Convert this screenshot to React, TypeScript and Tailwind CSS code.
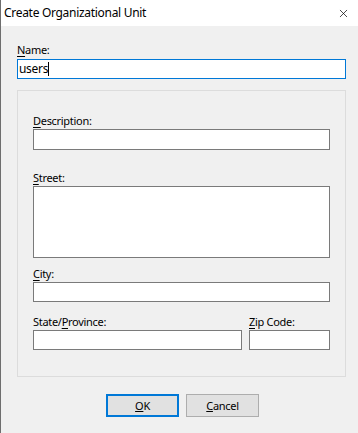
import { X } from 'lucide-react';

const font = { fontFamily: '"Noto Sans", "Open Sans", sans-serif' };

function Label({ mn, rest, pre = '' }: { mn: string; rest: string; pre?: string }) {
  return (
    <div className="h-[16px] text-[11px] leading-[16px] tracking-[-0.3px] text-black">
      {pre}
      <u className="underline-offset-[2px]">{mn}</u>
      {rest}
    </div>
  );
}

function Field({ h = 'h-[20px]', w = 'w-full' }: { h?: string; w?: string }) {
  return <div className={`${h} ${w} border border-[#7a7a7a] bg-white`} />;
}

export default function App() {
  return (
    <div className="w-[358px] h-[433px] bg-[#f0f0f0] border-l border-[#6e6e6e] flex flex-col" style={font}>
      {/* Title bar */}
      <div className="h-[26px] bg-white flex items-center justify-between pl-[3px] pr-[8px]">
        <span className="text-[12px] tracking-[-0.3px] text-black">Create Organizational Unit</span>
        <X className="w-[13px] h-[13px] text-black" strokeWidth={1.3} />
      </div>

      <div className="pl-[16px] pt-[16px]">
        <Label mn="N" rest="ame:" />
        <div className="mt-[1px] w-[329px] h-[20px] border border-[#0078d7] bg-white flex items-center pl-[1px]">
          <span className="text-[12px] leading-none tracking-[-0.3px] text-black">users</span>
          <span className="w-px h-[14px] bg-black" />
        </div>

        {/* Group box */}
        <div className="mt-[11px] w-[329px] h-[287px] border border-[#dcdcdc] px-[15px] pt-[22px]">
          <Label mn="D" rest="escription:" />
          <Field h="h-[21px]" />
          <div className="mt-[20px]">
            <Label mn="S" rest="treet:" />
            <Field h="h-[72px]" />
          </div>
          <div className="mt-[8px]">
            <Label mn="C" rest="ity:" />
            <Field />
          </div>
          <div className="mt-[12px] flex gap-[7px]">
            <div className="w-[209px]">
              <Label pre="State/" mn="P" rest="rovince:" />
              <Field />
            </div>
            <div className="w-[81px]">
              <Label mn="Z" rest="ip Code:" />
              <Field />
            </div>
          </div>
        </div>

        {/* Buttons */}
        <div className="mt-[17px] flex gap-[7px] pl-[89px]">
          <button className="w-[73px] h-[23px] bg-[#e1e1e1] border-2 border-[#0078d7] text-[11px] tracking-[-0.3px] text-black leading-none">
            <u>O</u>K
          </button>
          <button className="w-[73px] h-[23px] bg-[#e1e1e1] border border-[#adadad] text-[11px] tracking-[-0.3px] text-black leading-none">
            <u>C</u>ancel
          </button>
        </div>
      </div>
    </div>
  );
}
